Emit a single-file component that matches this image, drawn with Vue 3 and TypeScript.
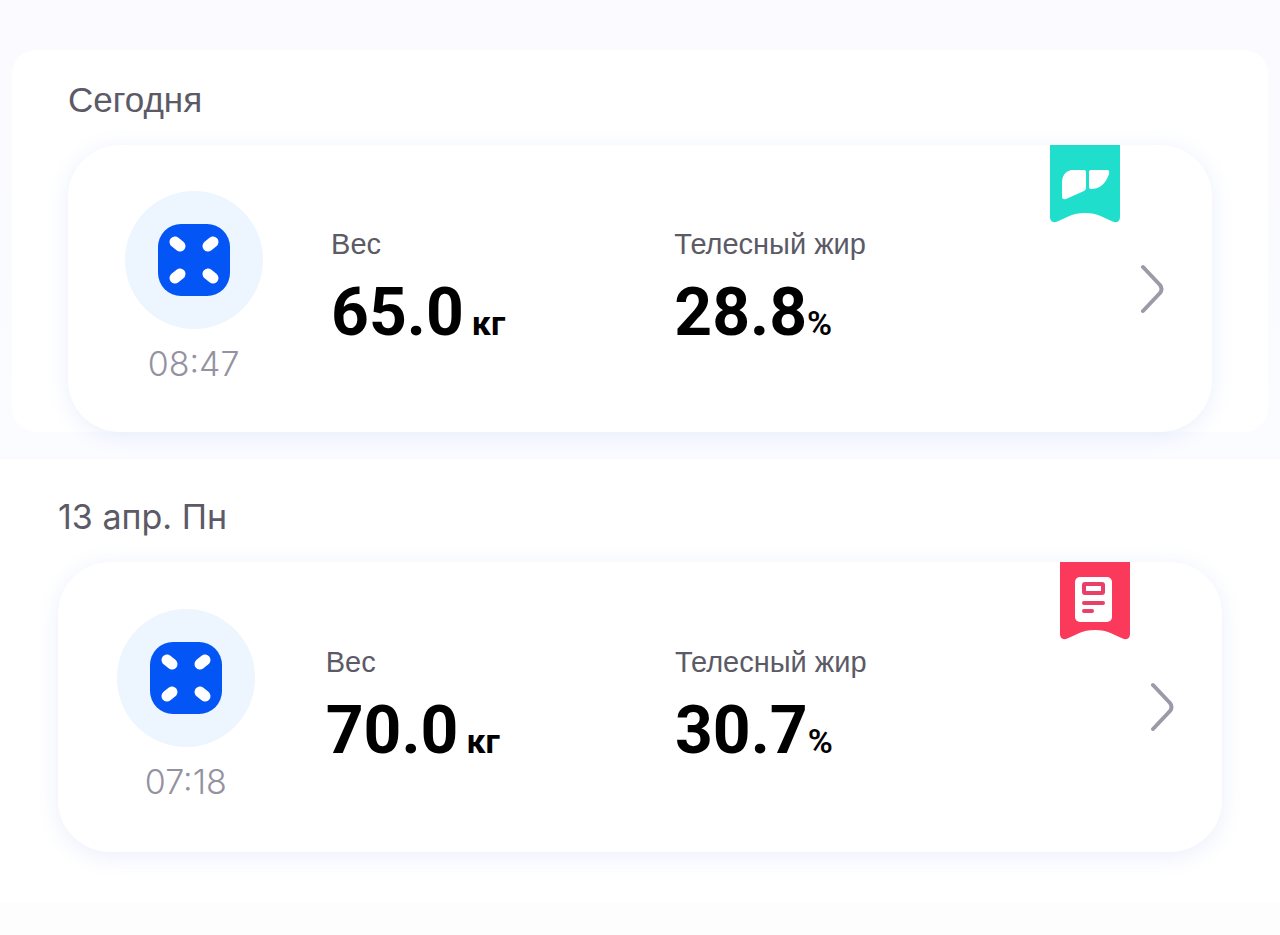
<script setup lang="ts">
type Badge = 'liver' | 'report'

interface Reading {
  id: string
  day: string
  time: string
  weight: string
  fat: string
  badge: Badge
}

const readings: Reading[] = [
  { id: 'today', day: 'Сегодня', time: '08:47', weight: '65.0', fat: '28.8', badge: 'liver' },
  { id: 'monday', day: '13 апр. Пн', time: '07:18', weight: '70.0', fat: '30.7', badge: 'report' },
]
</script>

<template>
  <main class="history">
    <section v-for="r in readings" :key="r.id" class="day" :class="r.id">
      <div class="panel">
        <h2 class="day-title">{{ r.day }}</h2>
        <a class="card" href="#" :aria-label="`${r.day}, ${r.time}`">
          <div class="source">
            <svg class="scale" viewBox="0 0 138 138" aria-hidden="true">
              <circle cx="69" cy="69" r="69" fill="#edf5ff" />
              <rect x="33" y="33" width="72" height="72" rx="23" fill="#0355f5" />
              <g stroke="#fff" stroke-width="11" stroke-linecap="round">
                <path d="M50 51l5 4M88 51l-5 4M50 87l5-4M88 87l-5-4" />
              </g>
            </svg>
            <time class="time">{{ r.time }}</time>
          </div>
          <div class="metric">
            <span class="label">Вес</span>
            <span class="value">{{ r.weight }}<span class="unit spaced">кг</span></span>
          </div>
          <div class="metric">
            <span class="label">Телесный жир</span>
            <span class="value">{{ r.fat }}<span class="unit percent">%</span></span>
          </div>
          <svg class="chevron" viewBox="0 0 24 50" aria-hidden="true">
            <path d="M3 3L20 21Q23 25 20 29L3 47" fill="none" stroke="#9c9aa8" stroke-width="4" stroke-linecap="round" stroke-linejoin="round" />
          </svg>
          <svg v-if="r.badge === 'liver'" class="ribbon" viewBox="0 0 70 78" aria-hidden="true">
            <path d="M0 0H70V72Q70 78 64 77C54 73 48 68 35 68C22 68 16 73 6 77Q0 78 0 72Z" fill="#1fdecb" />
            <path d="M21 25H34Q36 25 36 27V43Q36 45 34 46L16 54Q12 55 12 51V36Q13 27 21 25Z" fill="#fff" />
            <path d="M39 27Q39 25 41 25H57Q60 25 59 29C56 38 50 44 41 44Q39 44 39 42Z" fill="#fff" />
          </svg>
          <svg v-else class="ribbon" viewBox="0 0 70 78" aria-hidden="true">
            <path d="M0 0H70V72Q70 78 64 77C54 73 48 68 35 68C22 68 16 73 6 77Q0 78 0 72Z" fill="#fb395b" />
            <rect x="15" y="15" width="37" height="45" rx="5" fill="#fff" />
            <rect x="24" y="22" width="19" height="9" rx="1" fill="none" stroke="#e84068" stroke-width="4" stroke-linejoin="round" />
            <path d="M24 41H43M24 49H32" stroke="#e84068" stroke-width="4" stroke-linecap="round" />
          </svg>
        </a>
      </div>
    </section>
  </main>
</template>

<style>
body {
  margin: 0;
  background: #fdfdfe;
}
</style>

<style scoped>
.history {
  font-family: "Liberation Sans", Arial, sans-serif;
  color: #5c5a66;
}
.today {
  padding: 50px 12px 25px;
  background: linear-gradient(#fafaff, #fbfcff);
}
.panel {
  background: #fff;
}
.today .panel {
  padding: 30px 56px 0;
  border-radius: 24px;
}
.monday .panel {
  padding: 38px 58px 51px;
  border-top: 2px solid #f9faff;
}
.day-title {
  margin: 0 0 25px;
  font-size: 35px;
  line-height: 40px;
  font-weight: 400;
}
.monday .day-title {
  font-family: Inter, "Liberation Sans", sans-serif;
  font-size: 34px;
}
.card {
  position: relative;
  display: grid;
  grid-template-columns: 23% 30% 1fr auto;
  align-items: start;
  padding: 46px 0 47px;
  border-radius: 52px;
  background: #fff;
  box-shadow: 0 4px 22px rgba(70, 110, 230, 0.11);
  color: inherit;
  text-decoration: none;
}
.monday .card {
  padding: 47px 0 49px;
}
.source {
  display: flex;
  flex-direction: column;
  align-items: center;
  gap: 14px;
  padding-right: 12px;
}
.scale {
  width: 138px;
  height: 138px;
}
.time {
  font-family: Inter, sans-serif;
  font-size: 34px;
  line-height: 42px;
  font-weight: 300;
  color: #9492a0;
}
.metric {
  display: flex;
  flex-direction: column;
  gap: 16px;
  padding-top: 36px;
}
.label {
  font-size: 29px;
  line-height: 34px;
}
.value {
  font-family: Roboto, sans-serif;
  font-size: 66px;
  line-height: 72px;
  font-weight: 700;
  color: #000;
}
.unit {
  font-size: 34px;
}
.spaced {
  margin-left: 8px;
}
.percent {
  font-weight: 600;
}
.chevron {
  width: 24px;
  height: 50px;
  margin: 73px 48px 0 0;
}
.ribbon {
  position: absolute;
  top: 0;
  right: 92px;
  width: 70px;
  height: 78px;
}
</style>
